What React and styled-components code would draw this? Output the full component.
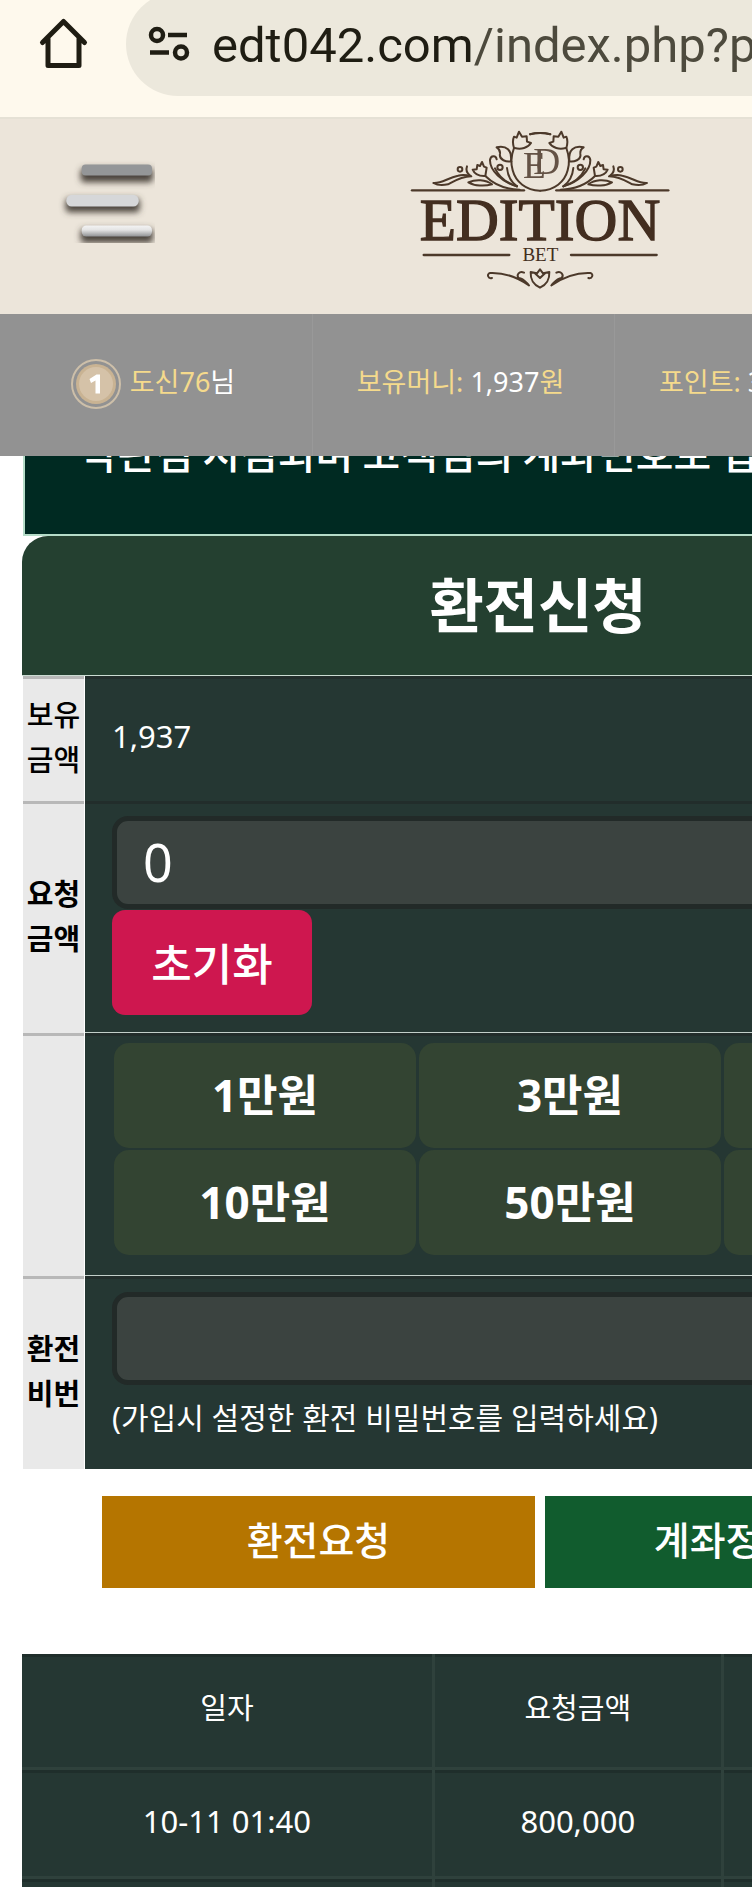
import React from "react";
import styled, { createGlobalStyle } from "styled-components";

const GlobalStyle = createGlobalStyle`
  *, *::before, *::after { box-sizing: border-box; }
  body { margin: 0; background: #fff; }
  body, button, input { font-family: "Noto Sans", "Noto Sans CJK KR", sans-serif; }
  button, input { margin: 0; border: 0; }
`;

const Screen = styled.div`
  height: 100vh;
  overflow: hidden;
  background: #fff;
`;

/* The site has a fixed minimum canvas and runs off the right of a narrow window. */
const Canvas = styled.div`
  min-width: 1080px;
`;

const BrowserBar = styled.div`
  display: flex;
  align-items: flex-start;
  height: 117px;
  overflow: hidden;
  padding-left: 36px;
  gap: 36px;
  background: #fef9ed;
`;

const IconButton = styled.button`
  display: flex;
  padding: 0;
  margin-top: ${(p) => p.$top}px;
  background: none;
`;

const AddressPill = styled.div`
  flex: 1;
  display: flex;
  align-items: center;
  gap: 22px;
  height: 104px;
  margin-top: -8px;
  padding-left: 22px;
  border-radius: 52px 0 0 52px;
  background: #ece8dc;
`;

const Url = styled.span`
  padding-top: 4px;
  font-family: Roboto, sans-serif;
  font-size: 49px;
  line-height: 60px;
  white-space: nowrap;
  color: #4d4a3d;
  b { font-weight: 400; color: #1f1d13; }
`;

const Header = styled.header`
  display: grid;
  grid-template-columns: 1fr auto 1fr;
  align-items: start;
  height: 197px;
  padding: 8px 55px 0;
  border-top: 2px solid #e5e1d5;
  background: #ece5da;
`;

const UserBar = styled.div`
  display: grid;
  grid-template-columns: 313px 302px 1fr;
  height: 142px;
  background: #929292;
`;

const UserCell = styled.div`
  display: flex;
  align-items: center;
  justify-content: ${(p) => (p.$start ? "flex-start" : "center")};
  gap: 9px;
  padding: 0 6px 6px ${(p) => (p.$start ? 44 : 0)}px;
  border-right: 1px solid #999;
  font-size: 27px;
  line-height: 40px;
  white-space: nowrap;
  color: #fff;
  em { font-style: normal; color: #f5da8c; }
`;

const Content = styled.main`
  padding: 0 26px 0 22px;
`;

const Notice = styled.div`
  display: flex;
  align-items: flex-end;
  height: 80px;
  overflow: hidden;
  margin-left: 1px;
  padding: 0 55px 54px;
  border: solid #b5dcc8;
  border-width: 0 2px 2px;
  background: #002a22;
  color: #fff;
  font-family: "Noto Sans CJK KR", sans-serif;
  font-size: 41px;
  font-weight: 500;
  line-height: 58px;
  white-space: nowrap;
`;

const Title = styled.h1`
  margin: 0;
  height: 140px;
  border-bottom: 1px solid #cbdcd2;
  border-radius: 26px 26px 0 0;
  background: #244030;
  color: #fff;
  font-family: "Noto Sans CJK KR", sans-serif;
  font-size: 59px;
  font-weight: 700;
  line-height: 134px;
  text-align: center;
`;

const FormRow = styled.div`
  display: grid;
  grid-template-columns: 61px 1fr;
  gap: 1px;
  min-height: ${(p) => p.$h}px;
  margin-left: 1px;
`;

const RowLabel = styled.label`
  display: flex;
  align-items: center;
  justify-content: center;
  padding-bottom: 8px;
  border-top: 3px solid #b8b8b8;
  background: #e9e9e9;
  color: #000;
  font-family: "Noto Sans CJK KR", sans-serif;
  font-size: 29px;
  font-weight: ${(p) => p.$weight || 700};
  line-height: 45px;
  text-align: center;
`;

const RowBody = styled.div`
  padding: ${(p) => p.$top || 0}px 24px 0 27px;
  border-bottom: ${(p) => (p.$line ? 1 : 0)}px solid #c3cfca;
  background: #253733;
  box-shadow: inset 0 3px #222d2b;
`;

const Amount = styled.output`
  display: block;
  color: #fff;
  font-size: 31px;
  line-height: 40px;
`;

const Field = styled.input`
  display: block;
  width: 100%;
  height: 93px;
  padding: 0 26px 2px;
  border: 5px solid #222a28;
  border-radius: 16px;
  background: #3b4340;
  color: #fff;
  font-size: 52px;
  outline: 0;
`;

const ResetButton = styled.button`
  display: block;
  width: 200px;
  height: 105px;
  margin-top: 1px;
  padding: 0 0 2px;
  border-radius: 13px;
  background: #ce174f;
  color: #fff;
  font-family: "Noto Sans CJK KR", sans-serif;
  font-size: 44px;
  font-weight: 500;
  line-height: 60px;
`;

const AmountGrid = styled.div`
  display: grid;
  grid-template-columns: repeat(3, 1fr);
  gap: 2px 3px;
  padding: 0 4px 0 2px;
`;

const AmountButton = styled.button`
  height: 105px;
  padding: 0 0 2px;
  border-radius: 15px;
  background: #334432;
  color: #fff;
  font-size: 44px;
  font-weight: 700;
  line-height: 60px;
`;

const Hint = styled.p`
  margin: 10px 0 0;
  color: #fff;
  font-size: 30px;
  line-height: 45px;
`;

const Actions = styled.div`
  display: grid;
  grid-template-columns: 1fr 1fr;
  gap: 10px;
  padding: 27px 76px 66px 80px;
`;

const ActionButton = styled.button`
  height: 92px;
  padding: 0 0 8px;
  background: ${(p) => p.$color};
  color: #fff;
  font-family: "Noto Sans CJK KR", sans-serif;
  font-size: 39px;
  font-weight: 500;
  line-height: 54px;
`;

const History = styled.table`
  width: 100%;
  table-layout: fixed;
  border-collapse: separate;
  border-spacing: 0;
  background: #253733;
  color: #fff;
  font-size: 31px;
  line-height: 40px;
  text-align: center;
  th { width: 32%; height: 116px; font-size: 29px; font-weight: 400; }
  th:nth-child(1) { width: 40%; }
  th:nth-child(2) { width: 28%; }
  td { height: 109px; }
  th, td {
    padding: 0 0 5px;
    border-bottom: 3px solid #2f413c;
    border-right: 3px solid #2f413c;
    box-shadow: inset 0 3px #1f2e2b;
  }
`;

const HomeIcon = () => (
  <svg width="54" height="56" viewBox="0 0 54 56" fill="none" stroke="#1f1d13" strokeWidth="5" strokeLinejoin="round" strokeLinecap="round">
    <path d="M6.5 27.5 27.500 6.5 48.500 27.500M12 23V50.500H43V23" />
  </svg>
);

const TuneIcon = () => (
  <svg width="42" height="36" viewBox="0 0 42 36" fill="none" stroke="#1f1d13" strokeWidth="4.500">
    <circle cx="9" cy="9" r="6" />
    <path d="M20 9H39M2 26.500H21" />
    <circle cx="33" cy="26.500" r="6" />
  </svg>
);

const MenuIcon = () => (
  <svg width="100" height="83" viewBox="45 60 300 248">
    <defs>
      <filter id="soft" x="-20%" y="-80%" width="140%" height="300%">
        <feGaussianBlur stdDeviation="9" />
      </filter>
      <filter id="edge"><feGaussianBlur stdDeviation="1.800" /></filter>
      <linearGradient id="white" x1="0" y1="0" x2="0" y2="1">
        <stop offset="0" stopColor="#f4f4f4" />
        <stop offset="0.400" stopColor="#e4e4e4" />
        <stop offset="1" stopColor="#909294" />
      </linearGradient>
    </defs>
    <g fill="#4c453e" filter="url(#soft)">
      <rect x="122" y="84" width="217" height="42" rx="12" />
      <rect x="77" y="174" width="222" height="42" rx="12" />
      <rect x="122" y="266" width="217" height="42" rx="12" />
    </g>
    <g filter="url(#edge)">
      <rect x="125" y="73" width="211" height="33" rx="12" fill="#949698" />
      <rect x="79" y="164" width="217" height="35" rx="16" fill="#d6d7d9" />
      <rect x="125" y="256" width="211" height="33" rx="14" fill="url(#white)" />
    </g>
  </svg>
);

const Branch = () => (
  <g>
    <path d="M66 240H402" strokeWidth="7" />
    <path d="M101 434H358" strokeWidth="7" />
    <path d="M372 113C364 135 362 160 368 180C377 215 408 240 450 241" />
    <path d="M372 113C368 100 368 88 372 79L380 82L387 64L396 79L410 78L411 94L423 98C414 113 393 118 374 113" />
    <path d="M420 72Q450 64 481 72" />
    <path d="M364 153C350 156 326 149 330 130C331 120 325 114 320 111C350 105 366 119 363 151" />
    <path d="M320 147C318 134 302 134 300 149C299 180 336 216 381 228" />
    <path d="M315 174C326 198 350 218 381 228" />
    <path d="M351 173C353 195 363 215 381 228" />
    <circle cx="330" cy="171" r="8" />
    <path d="M286 197C307 218 343 237 389 238" />
    <path d="M286 197C268 198 254 192 248 178L260 177L262 164L270 167L276 155L282 169L290 172L286 197" />
    <path d="M235 216C257 206 287 207 306 222C284 228 253 227 235 216Z" />
    <path d="M130 218C154 220 171 204 204 196C219 192 231 194 244 198C213 199 193 212 174 222C157 226 142 225 130 218Z" />
    <circle cx="210" cy="177" r="7" />
    <path d="M231 168C226 181 232 190 242 197" />
    <path d="M306 503C294 506 289 491 300 488C344 486 382 501 417 525C405 513 401 505 386 503C378 493 388 481 402 487" />
  </g>
);

const Logo = () => (
  <svg width="260" height="163" viewBox="60 50 780 489" role="img" aria-label="EDITION BET">
    <g fill="none" stroke="#4c392a" strokeWidth="6" strokeLinecap="round" strokeLinejoin="round">
      <Branch />
      <g transform="matrix(-1 0 0 1 901 0)"><Branch /></g>
      <path d="M450 477L459 489L478 485C479 509 471 522 450 532C429 522 421 509 422 485L441 489ZM434 488L450 503L466 488" />
    </g>
    <g fill="#432e20" fontFamily="'Liberation Serif', serif">
      <g opacity="0.800">
        <text x="399" y="202" fontSize="112">E</text>
        <text x="430" y="190" fontSize="112">D</text>
      </g>
      <text x="450" y="389" fontSize="178" stroke="#432e20" strokeWidth="4" textAnchor="middle">EDITION</text>
      <text x="451" y="452" fontSize="57" textAnchor="middle">BET</text>
    </g>
  </svg>
);

const Badge = () => (
  <svg width="50" height="56" viewBox="0 0 50 56">
    <circle cx="25" cy="30" r="24" fill="none" stroke="#cdbfa9" strokeWidth="2" />
    <circle cx="25" cy="30" r="20" fill="#c9b393" />
    <circle cx="25" cy="30" r="17" fill="#d5c2a8" />
    <path d="M18.500 25 25.500 20.500H29V39.500H24.500V26.500L20 29Z" fill="#fff" />
  </svg>
);

const presets = ["1만원", "3만원", "5만원", "10만원", "50만원", "100만원"];

export default function App() {
  return (
    <Screen>
      <GlobalStyle />
      <BrowserBar>
        <IconButton $top={15} aria-label="홈"><HomeIcon /></IconButton>
        <AddressPill>
          <TuneIcon />
          <Url><b>edt042.com</b>/index.php?p</Url>
        </AddressPill>
      </BrowserBar>
      <Canvas>
        <Header>
          <IconButton $top={33} aria-label="메뉴"><MenuIcon /></IconButton>
          <Logo />
        </Header>
        <UserBar>
          <UserCell><Badge /><span><em>도신76</em>님</span></UserCell>
          <UserCell><span><em>보유머니:</em> 1,937<em>원</em></span></UserCell>
          <UserCell $start><span><em>포인트:</em> 3</span></UserCell>
        </UserBar>
        <Content>
          <Notice>약관점 시점되며 고객님의 계좌번호로 입금</Notice>
          <Title>환전신청</Title>
          <FormRow $h={125}>
            <RowLabel htmlFor="balance" $weight={500}>보유<br />금액</RowLabel>
            <RowBody $top={40}><Amount id="balance">1,937</Amount></RowBody>
          </FormRow>
          <FormRow $h={232}>
            <RowLabel htmlFor="amount">요청<br />금액</RowLabel>
            <RowBody $top={15} $line>
              <Field id="amount" defaultValue="0" />
              <ResetButton type="button">초기화</ResetButton>
            </RowBody>
          </FormRow>
          <FormRow $h={243}>
            <RowLabel as="div" />
            <RowBody $top={10} $line>
              <AmountGrid>
                {presets.map((p) => <AmountButton type="button" key={p}>{p}</AmountButton>)}
              </AmountGrid>
            </RowBody>
          </FormRow>
          <FormRow $h={193}>
            <RowLabel htmlFor="pin">환전<br />비번</RowLabel>
            <RowBody $top={16}>
              <Field id="pin" type="password" />
              <Hint>(가입시 설정한 환전 비밀번호를 입력하세요)</Hint>
            </RowBody>
          </FormRow>
          <Actions>
            <ActionButton type="button" $color="#b57500">환전요청</ActionButton>
            <ActionButton type="button" $color="#115c2e">계좌정보문의</ActionButton>
          </Actions>
          <History>
            <thead>
              <tr><th>일자</th><th>요청금액</th><th>상태</th></tr>
            </thead>
            <tbody>
              <tr><td>10-11 01:40</td><td>800,000</td><td /></tr>
              <tr><td /><td /><td /></tr>
            </tbody>
          </History>
        </Content>
      </Canvas>
    </Screen>
  );
}
